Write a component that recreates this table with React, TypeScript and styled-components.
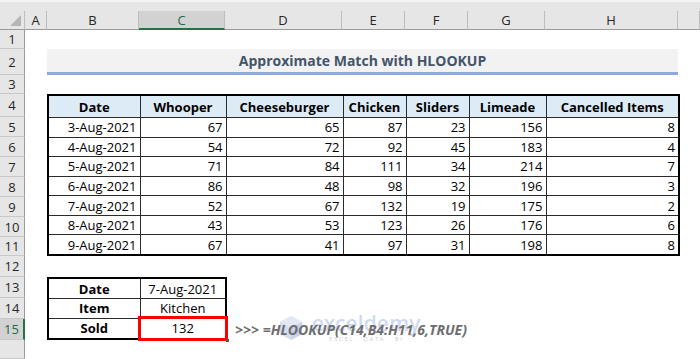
import React from "react";
import styled, { createGlobalStyle } from "styled-components";

const GlobalStyle = createGlobalStyle`
  html, body {
    margin: 0;
    padding: 0;
    background: #ffffff;
    overflow: hidden;
  }
  body {
    font-family: "Open Sans", "Noto Sans", sans-serif;
  }
`;

const Window = styled.div`
  width: 700px;
  height: 359px;
  display: flex;
  flex-direction: column;
  background: #ffffff;
`;

const TopStrip = styled.div`
  height: 11px;
  flex: none;
  background: #e6e6e6;
  border-top: 2px solid #f3f3f3;
  box-sizing: border-box;
`;

const Sheet = styled.div`
  position: relative;
  flex: 1;
  display: grid;
  grid-template-columns: 25px 22px 92px 86px 117px 63px 63px 77px 133px 1fr;
  grid-template-rows: 19px 19px 26px 19px 23px repeat(6, 20px) 19px 21px 21px 21px 21px 1fr;
  color: #000;
`;

const Corner = styled.div`
  grid-row: 1;
  grid-column: 1;
  background: #e6e6e6;
  border-right: 1px solid #bdbdbd;
  border-bottom: 1px solid #9b9b9b;
  position: relative;
  &::after {
    content: "";
    position: absolute;
    right: 3px;
    bottom: 3px;
    width: 0;
    height: 0;
    border-left: 11px solid transparent;
    border-bottom: 11px solid #b5b5b5;
  }
`;

const ColHead = styled.div<{ $col: number; $active?: boolean }>`
  grid-row: 1;
  grid-column: ${(p) => p.$col};
  display: flex;
  align-items: center;
  justify-content: center;
  font-size: 13px;
  background: ${(p) => (p.$active ? "#d2d2d2" : "#e6e6e6")};
  color: ${(p) => (p.$active ? "#1e6b3e" : "#262626")};
  border-right: 1px solid #bdbdbd;
  border-bottom: ${(p) => (p.$active ? "2px solid #217346" : "1px solid #9b9b9b")};
  box-sizing: border-box;
`;

const RowHead = styled.div<{ $row: number; $active?: boolean }>`
  grid-column: 1;
  grid-row: ${(p) => p.$row + 1};
  display: flex;
  align-items: center;
  justify-content: center;
  font-size: 13px;
  background: ${(p) => (p.$active ? "#d2d2d2" : "#e6e6e6")};
  color: ${(p) => (p.$active ? "#1e6b3e" : "#262626")};
  border-bottom: 1px solid #c8c8c8;
  border-right: ${(p) => (p.$active ? "2px solid #217346" : "1px solid #9b9b9b")};
  box-sizing: border-box;
`;

const Title = styled.div`
  grid-row: 3;
  grid-column: 3 / 10;
  display: flex;
  align-items: center;
  justify-content: center;
  background: #f2f2f2;
  border-bottom: 3px solid #8eaadb;
  box-sizing: border-box;
  color: #44546a;
  font-weight: 700;
  font-size: 14px;
`;

const TableArea = styled.div<{ $rows: string; $cols: string }>`
  grid-row: ${(p) => p.$rows};
  grid-column: ${(p) => p.$cols};
`;

const Table = styled.table`
  border-collapse: collapse;
  table-layout: fixed;
  width: 100%;
  height: 100%;
  border: 2px solid #000;
  font-size: 13px;
`;

const Th = styled.th`
  background: #ddebf7;
  font-weight: 700;
  text-align: center;
  border: 1px solid #2b2b2b;
  padding: 0 3px;
  white-space: nowrap;
  height: 21px;
`;

const Td = styled.td<{ $align?: "left" | "center" | "right"; $bold?: boolean; $marked?: boolean }>`
  position: relative;
  border: 1px solid #2b2b2b;
  text-align: ${(p) => p.$align ?? "right"};
  font-weight: ${(p) => (p.$bold ? 700 : 400)};
  padding: 0 3px;
  white-space: nowrap;
  line-height: 18px;
  ${(p) =>
    p.$marked &&
    `
    outline: 3px solid #ff0000;
    outline-offset: -1px;
    &::after {
      content: "";
      position: absolute;
      right: -4px;
      bottom: -4px;
      width: 3px;
      height: 3px;
      background: #217346;
    }
  `}
`;

const Formula = styled.div`
  grid-row: 16;
  grid-column: 5 / 11;
  display: flex;
  align-items: center;
  padding-left: 10px;
  font-size: 14px;
  font-weight: 700;
  font-style: italic;
  color: #6e6e6e;
  white-space: nowrap;
  position: relative;
  z-index: 1;
`;

const Watermark = styled.div`
  position: absolute;
  left: 278px;
  top: 302px;
  display: flex;
  align-items: center;
  gap: 8px;
  opacity: 0.5;
  pointer-events: none;
`;

const MarkText = styled.div`
  display: flex;
  flex-direction: column;
  align-items: center;
  line-height: 1;
`;

const MarkName = styled.span`
  font-family: "Noto Sans", sans-serif;
  font-size: 21px;
  font-weight: 500;
  color: #9fb3e3;
  letter-spacing: 0.2px;
`;

const MarkTag = styled.span`
  font-size: 6px;
  color: #9a9a9a;
  letter-spacing: 1.6px;
  margin-top: 2px;
`;

const columns = ["A", "B", "C", "D", "E", "F", "G", "H", ""];

const headers = ["Date", "Whooper", "Cheeseburger", "Chicken", "Sliders", "Limeade", "Cancelled Items"];

const rows: [string, number, number, number, number, number, number][] = [
  ["3-Aug-2021", 67, 65, 87, 23, 156, 8],
  ["4-Aug-2021", 54, 72, 92, 45, 183, 4],
  ["5-Aug-2021", 71, 84, 111, 34, 214, 7],
  ["6-Aug-2021", 86, 48, 98, 32, 196, 3],
  ["7-Aug-2021", 52, 67, 132, 19, 175, 2],
  ["8-Aug-2021", 43, 53, 123, 26, 176, 6],
  ["9-Aug-2021", 67, 41, 97, 31, 198, 8],
];

const widths = [92, 86, 117, 63, 63, 77, 133];

function Logo() {
  return (
    <svg width="26" height="26" viewBox="0 0 26 26">
      <polygon points="13,1 24,7 24,19 13,25 2,19 2,7" fill="#aebcdc" />
      <polygon points="13,1 24,7 13,13 2,7" fill="#c9d3ea" />
      <polygon points="13,13 24,7 24,19 13,25" fill="#93a6d2" />
    </svg>
  );
}

export default function App() {
  return (
    <Window>
      <GlobalStyle />
      <TopStrip />
      <Sheet>
        <Corner />
        {columns.map((c, i) => (
          <ColHead key={i} $col={i + 2} $active={c === "C"}>
            {c}
          </ColHead>
        ))}
        {Array.from({ length: 16 }, (_, i) => (
          <RowHead key={i} $row={i + 1} $active={i + 1 === 15}>
            {i + 1 < 16 ? i + 1 : ""}
          </RowHead>
        ))}

        <Title>Approximate Match with HLOOKUP</Title>

        <TableArea $rows="5 / 13" $cols="3 / 10">
          <Table>
            <colgroup>
              {widths.map((w, i) => (
                <col key={i} style={{ width: w }} />
              ))}
            </colgroup>
            <thead>
              <tr>
                {headers.map((h) => (
                  <Th key={h}>{h}</Th>
                ))}
              </tr>
            </thead>
            <tbody>
              {rows.map((r) => (
                <tr key={r[0]}>
                  {r.map((v, i) => (
                    <Td key={i}>{v}</Td>
                  ))}
                </tr>
              ))}
            </tbody>
          </Table>
        </TableArea>

        <TableArea $rows="14 / 17" $cols="3 / 5">
          <Table>
            <colgroup>
              <col style={{ width: 92 }} />
              <col style={{ width: 86 }} />
            </colgroup>
            <tbody>
              <tr>
                <Td $align="center" $bold>Date</Td>
                <Td $align="center">7-Aug-2021</Td>
              </tr>
              <tr>
                <Td $align="center" $bold>Item</Td>
                <Td $align="center">Kitchen</Td>
              </tr>
              <tr>
                <Td $align="center" $bold>Sold</Td>
                <Td $align="center" $marked>132</Td>
              </tr>
            </tbody>
          </Table>
        </TableArea>

        <Formula>{">>> =HLOOKUP(C14,B4:H11,6,TRUE)"}</Formula>

        <Watermark>
          <Logo />
          <MarkText>
            <MarkName>exceldemy</MarkName>
            <MarkTag>EXCEL · DATA · BI</MarkTag>
          </MarkText>
        </Watermark>
      </Sheet>
    </Window>
  );
}
